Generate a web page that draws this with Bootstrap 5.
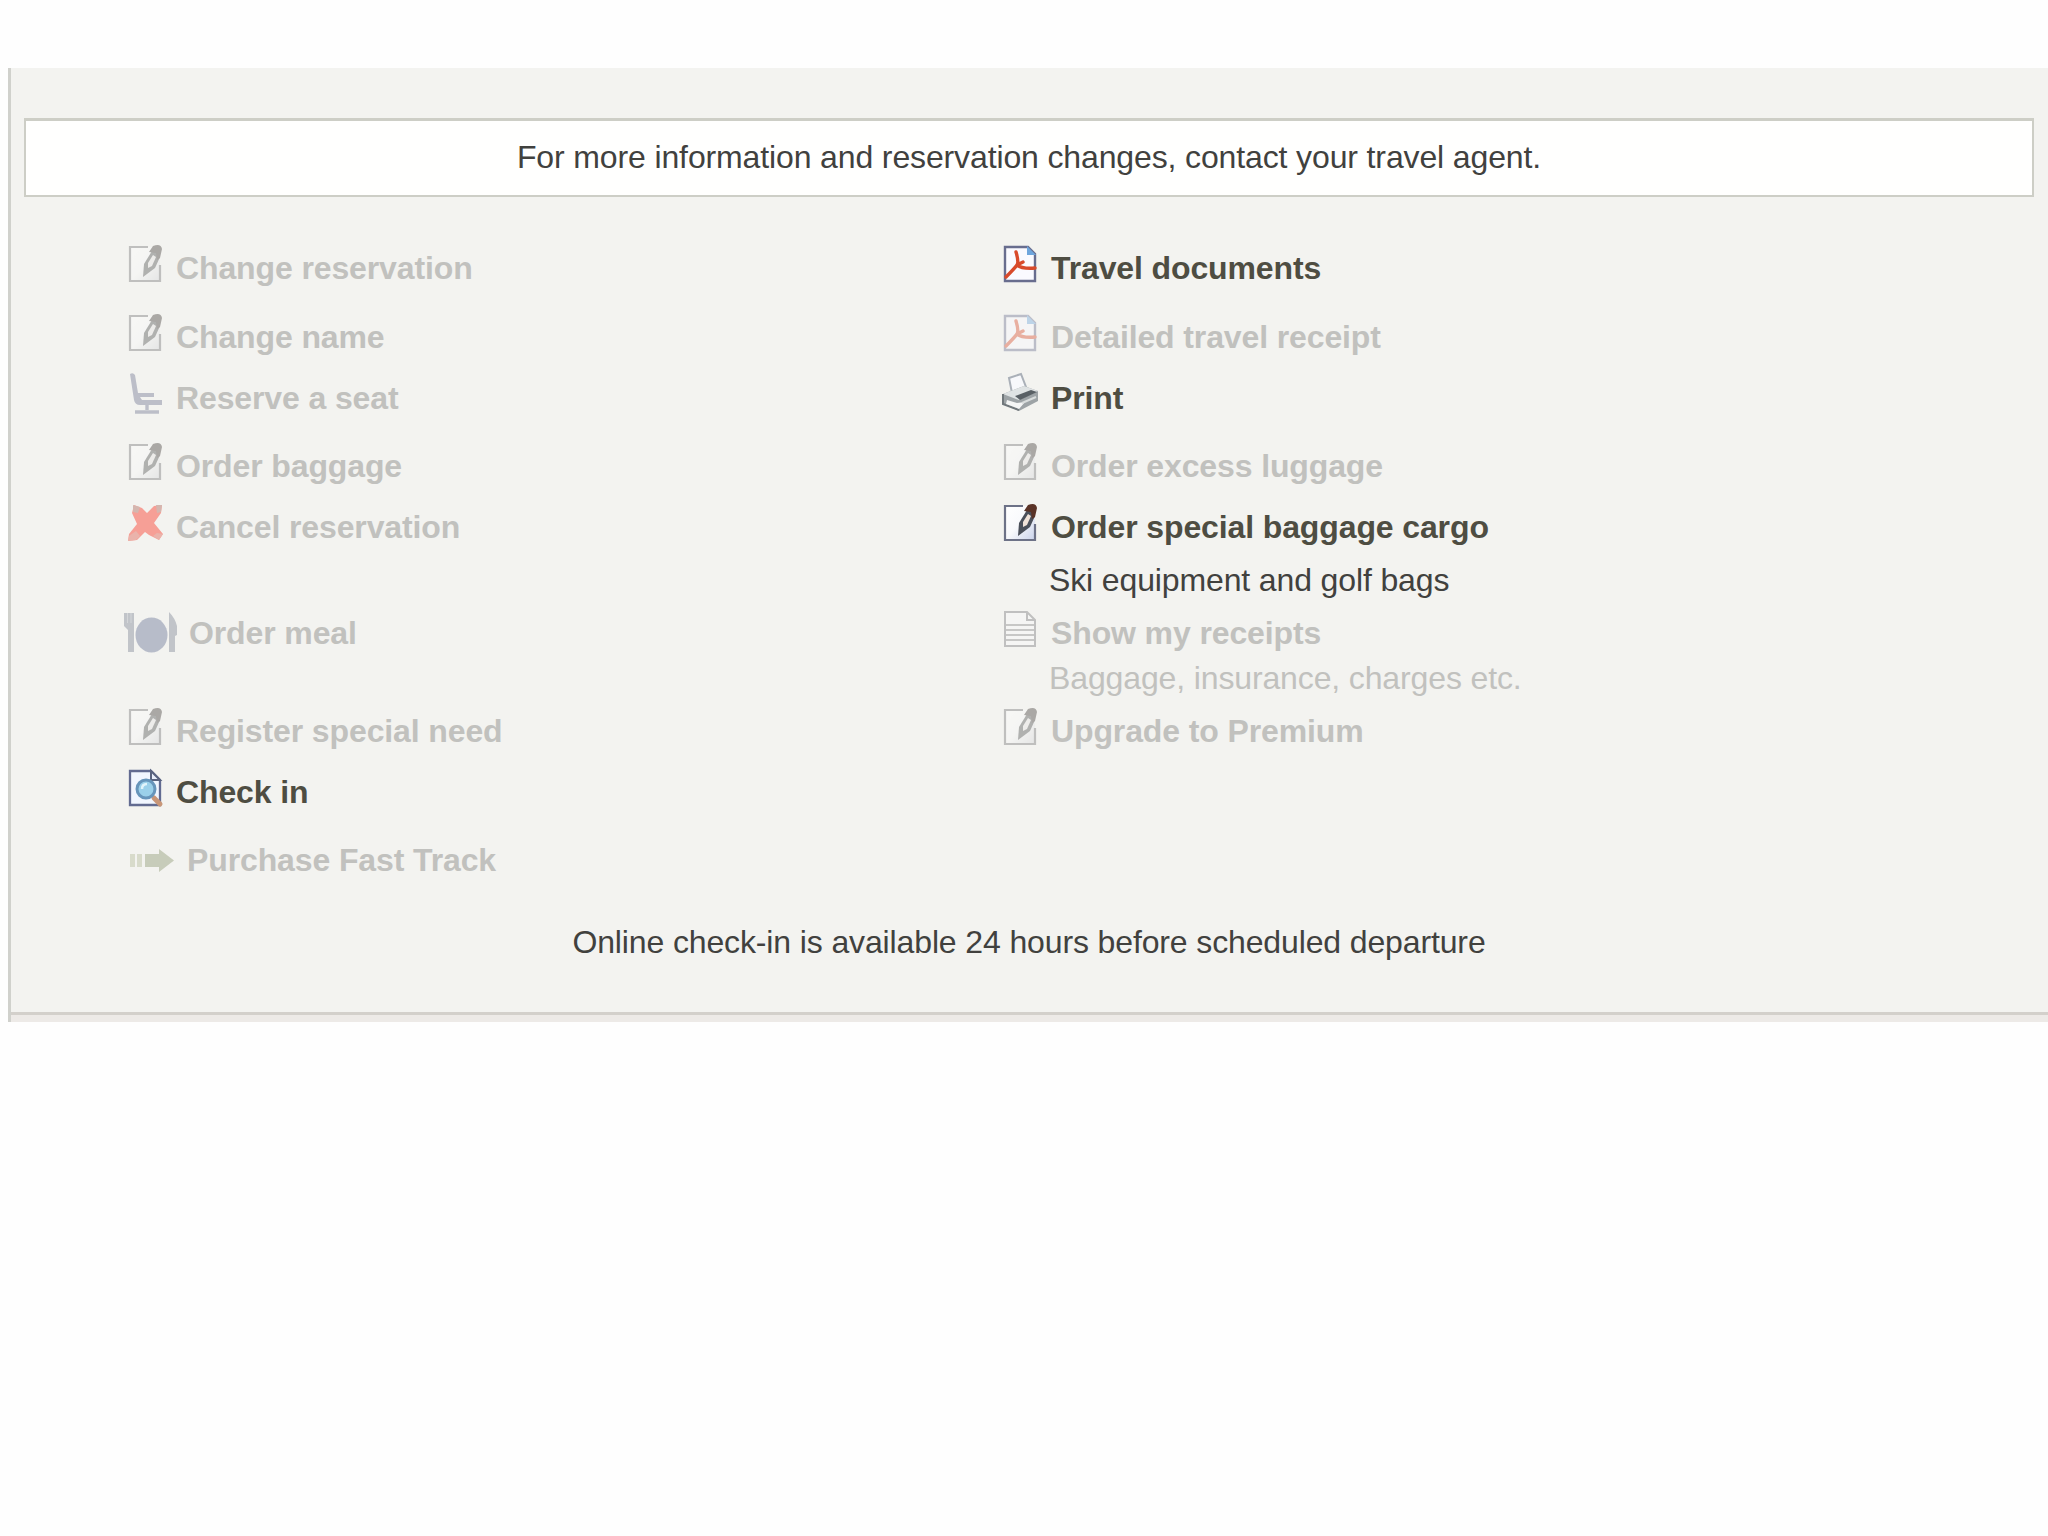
<!DOCTYPE html>
<html lang="en">
<head>
<meta charset="utf-8">
<meta name="viewport" content="width=device-width, initial-scale=1">
<title>Reservation services</title>
<link href="https://cdn.jsdelivr.net/npm/bootstrap@5.3.0/dist/css/bootstrap.min.css" rel="stylesheet">
<style>
body{background:#fefefe;font-family:"Liberation Sans",Arial,sans-serif;font-size:32px;line-height:36px;letter-spacing:-.13px;color:#41413e;padding:68px 0 0 8px;overflow:hidden}
.panel{height:954px;background:#f3f3f0;border-left:3px solid #d0d1cc;padding:50px 14px 0 13px}
.notice{height:79px;background:#fffffe;border:solid #cdcec6;border-width:3px 2px 2px;padding-top:18px}
.services{padding:21px 0 0 100px}
.service-col{width:875px}
.service{height:68px;color:#4e4d42;font-weight:700;letter-spacing:-.12px;text-decoration:none;white-space:nowrap}
.service:nth-child(2){height:69px}
.service.short{height:61px}
.service.low{height:53px}
.service.gap-row{height:106px}
.service.gap-wide{height:98px}
.off{color:#c1c1be}
.off svg{opacity:.4}
.off .muted-icon{filter:grayscale(.85)}
.service svg{width:52px;height:50px;flex:none;overflow:visible}
.service .wide-icon{width:65px}
.service .arrow-icon{width:63px}
.hint{height:53px;padding-left:50px}
.hint.tight{height:45px}
.checkin-note{padding-top:46px}
.foot{margin:0 -14px 0 -13px;height:10px;background:#edeae7;border-top:3px solid #d3d0cb}
</style>
</head>
<body>
<svg width="0" height="0" class="position-absolute" aria-hidden="true">
<defs>
<linearGradient id="sheet" x1="0" y1="0" x2="1" y2="1"><stop offset="0" stop-color="#fff"/><stop offset=".5" stop-color="#f8f9fc"/><stop offset="1" stop-color="#c9d2ea"/></linearGradient>
<g id="edit">
<path d="M6 11H36V45H6Z" fill="url(#sheet)"/>
<path d="M24 11H6V45H36V29" fill="none" stroke="#6d7287" stroke-width="2.2"/>
<path d="M19 41L20 28L28 15Q36 15 36 21L31 32Z" fill="#4a4f59"/>
<path d="M24 32L24 27L29 19L32 21L28 30Z" fill="#f0e2d8"/>
<path d="M25 16L29 10Q37 7 38 13L36 22L33 24L32 17Z" fill="#5a3327"/>
</g>
<g id="pdf">
<path d="M6 11H29L36 18V45H6Z" fill="#fafaff" stroke="#686d8e" stroke-width="2.4"/>
<path d="M28 10V19H37Z" fill="#6fa6dd"/>
<path d="M17 16Q20 26 18 29T7 41M18 29Q23 33 36 32M18 29L24 26" fill="none" stroke="#d84a2b" stroke-width="3.4" stroke-linecap="round"/>
</g>
<g id="print">
<path d="M10 12L22 8L27 21L13 27Z" fill="#f7f8fb" stroke="#aab0b8" stroke-width="2"/>
<path d="M4 28L25 20L39 25V35L20 45L4 38Z" fill="#9da3a6"/>
<path d="M4 28L25 20L39 25L20 34Z" fill="#dfe3e4"/>
<path d="M4 28V38L20 44" fill="none" stroke="#70777b" stroke-width="2"/>
<path d="M16 30L32 24L38 26L21 34Z" fill="#596065"/>
<path d="M8 34L18 37L26 36L20 43L7 38Z" fill="#f4f5f5"/>
<path d="M23 37L37 31" stroke="#d9dddd" stroke-width="2"/>
</g>
<g id="seat">
<path d="M6 8Q9 6 11 9L14 27H30V31H16L18 34H38V39H16Q11 39 10 34Z" fill="#6b718f"/>
<path d="M23 39V44M11 46H35" stroke="#6b718f" stroke-width="3.4"/>
</g>
<g id="cancel">
<path d="M10 10L18 13L23 18L30 11L38 10L37 18L30 28L39 39L35 45L25 40L21 37L13 45L4 46L5 39L13 29L8 18Z" fill="#fb2412"/>
<path d="M9 10L16 12L14 18L9 17ZM32 10L38 10L37 17L33 18Z" fill="#a75c50"/>
<path d="M5 41L12 36L16 41L12 45L4 46ZM33 38L39 39L35 45L29 41Z" fill="#dd5646"/>
</g>
<g id="meal">
<ellipse cx="27.500" cy="34" rx="16" ry="17.500" fill="#606c90"/>
<path d="M0 12H10V51H4V29L0 25Z" fill="#777f90"/>
<path d="M3.500 12V22M7 12V22" stroke="#a8acb8" stroke-width="1"/>
<path d="M45 11Q51 17 53 25V34L51 35V51H45V33Z" fill="#777f90"/>
</g>
<g id="search">
<path d="M6 11H27L36 20V45H6Z" fill="#f1f6ff" stroke="#626b91" stroke-width="2.300"/>
<path d="M27 11V20H36Z" fill="#e8eefb" stroke="#59637f" stroke-width="2"/>
<path d="M30 38L36 44" stroke="#c89678" stroke-width="5" stroke-linecap="round"/>
<circle cx="22" cy="29" r="9" fill="#9bd0ea" stroke="#6795bb" stroke-width="3"/>
<path d="M18 29Q18 24 23 24" fill="none" stroke="#e2f4fb" stroke-width="2.500"/>
</g>
<g id="receipt">
<path d="M6 11H28L36 19V45H6Z" fill="#fafaff" stroke="#73758a" stroke-width="2"/>
<path d="M28 11V19H36" fill="none" stroke="#73758a" stroke-width="2"/>
<path d="M7 24H35M7 29H35M7 34H35M7 39H35" stroke="#858697" stroke-width="1.800"/>
</g>
<g id="fast">
<path d="M6 26H11V39H6ZM13 26H18V39H13Z" fill="#b0b995"/>
<path d="M21 26H35V21L50 32.500L35 44V39H21Z" fill="#87936a"/>
</g>
</defs>
</svg>

<main class="panel d-flex flex-column">
<div class="notice text-center">For more information and reservation changes, contact your travel agent.</div>
<div class="services d-flex">
<div class="service-col d-flex flex-column">
<div class="service off d-flex align-items-end"><svg class="muted-icon"><use href="#edit"/></svg><span>Change reservation</span></div>
<div class="service off d-flex align-items-end"><svg class="muted-icon"><use href="#edit"/></svg><span>Change name</span></div>
<div class="service short off d-flex align-items-end"><svg><use href="#seat"/></svg><span>Reserve a seat</span></div>
<div class="service off d-flex align-items-end"><svg class="muted-icon"><use href="#edit"/></svg><span>Order baggage</span></div>
<div class="service short off d-flex align-items-end"><svg><use href="#cancel"/></svg><span>Cancel reservation</span></div>
<div class="service gap-row off d-flex align-items-end"><svg class="wide-icon"><use href="#meal"/></svg><span>Order meal</span></div>
<div class="service gap-wide off d-flex align-items-end"><svg class="muted-icon"><use href="#edit"/></svg><span>Register special need</span></div>
<a class="service short d-flex align-items-end"><svg><use href="#search"/></svg><span>Check in</span></a>
<div class="service off d-flex align-items-end"><svg class="arrow-icon"><use href="#fast"/></svg><span>Purchase Fast Track</span></div>
</div>
<div class="service-col d-flex flex-column">
<a class="service d-flex align-items-end"><svg><use href="#pdf"/></svg><span>Travel documents</span></a>
<div class="service off d-flex align-items-end"><svg><use href="#pdf"/></svg><span>Detailed travel receipt</span></div>
<a class="service short d-flex align-items-end"><svg><use href="#print"/></svg><span>Print</span></a>
<div class="service off d-flex align-items-end"><svg class="muted-icon"><use href="#edit"/></svg><span>Order excess luggage</span></div>
<a class="service short d-flex align-items-end"><svg><use href="#edit"/></svg><span>Order special baggage cargo</span></a>
<div class="hint d-flex align-items-end">Ski equipment and golf bags</div>
<div class="service low off d-flex align-items-end"><svg class="muted-icon"><use href="#receipt"/></svg><span>Show my receipts</span></div>
<div class="hint tight off d-flex align-items-end">Baggage, insurance, charges etc.</div>
<div class="service low off d-flex align-items-end"><svg class="muted-icon"><use href="#edit"/></svg><span>Upgrade to Premium</span></div>
</div>
</div>
<div class="checkin-note text-center">Online check-in is available 24 hours before scheduled departure</div>
<div class="foot mt-auto"></div>
</main>
<script src="https://cdn.jsdelivr.net/npm/bootstrap@5.3.0/dist/js/bootstrap.bundle.min.js"></script>
</body>
</html>
